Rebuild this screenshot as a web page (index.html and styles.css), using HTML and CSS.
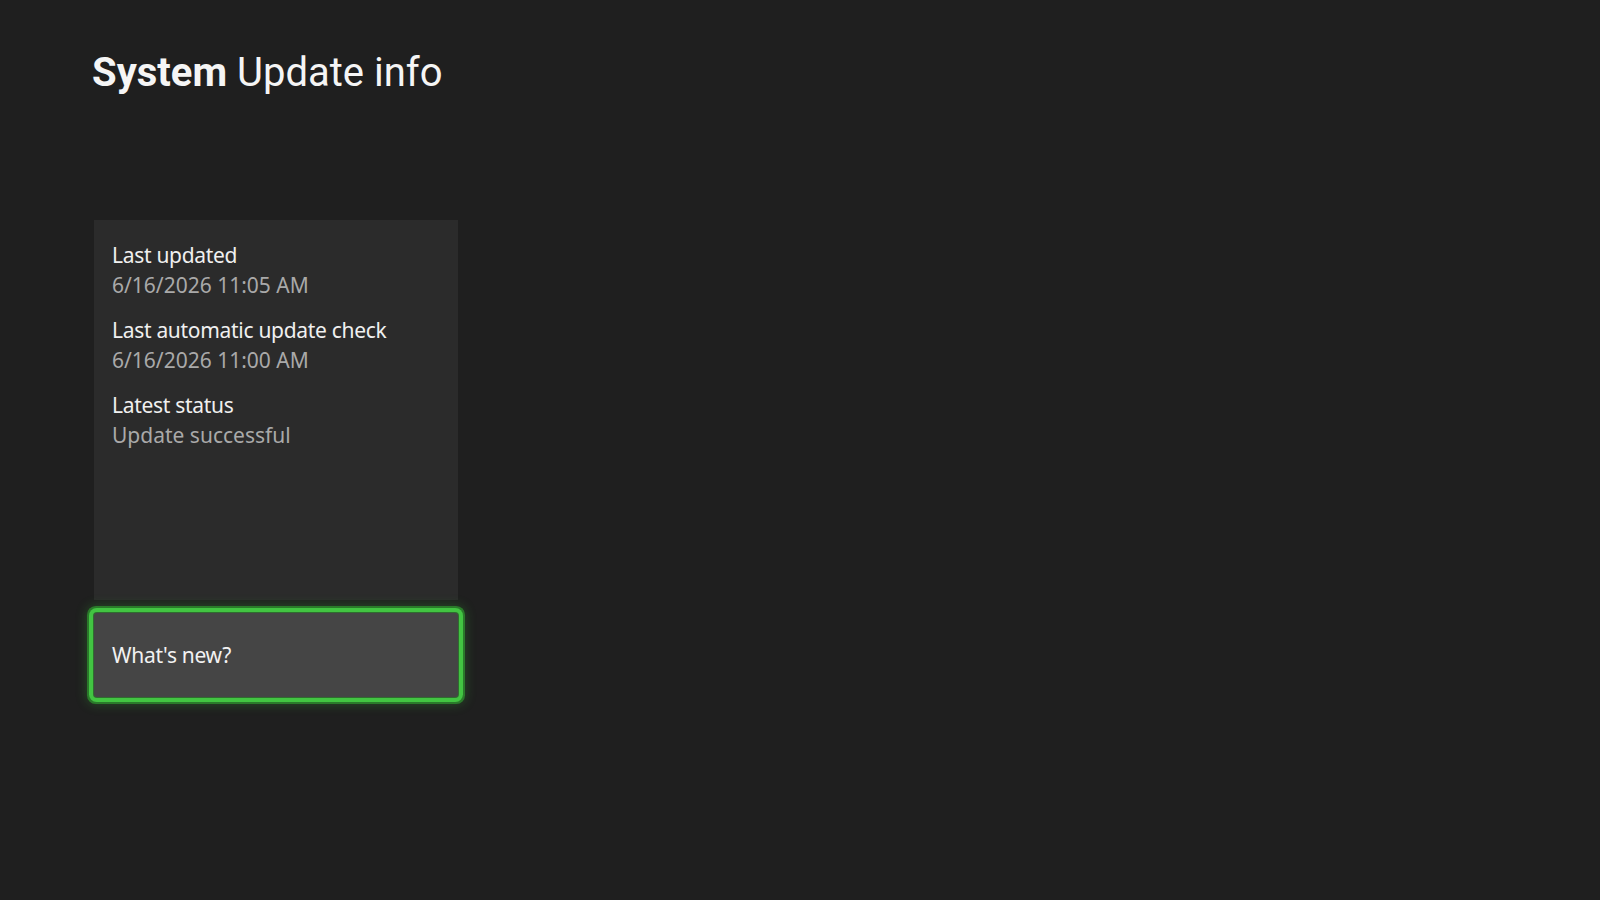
FILE: index.html
```html
<!DOCTYPE html>
<html lang="en">
<head>
<meta charset="utf-8">
<title>System Update info</title>
<link rel="stylesheet" href="styles.css">
</head>
<body>
<div class="page">
  <h1 class="title"><span class="title-strong">System</span> Update info</h1>
  <div class="panel">
    <div class="info-card">
      <div class="info-group">
        <div class="info-label">Last updated</div>
        <div class="info-value">6/16/2026 11:05 AM</div>
      </div>
      <div class="info-group">
        <div class="info-label">Last automatic update check</div>
        <div class="info-value">6/16/2026 11:00 AM</div>
      </div>
      <div class="info-group">
        <div class="info-label">Latest status</div>
        <div class="info-value">Update successful</div>
      </div>
    </div>
    <button class="action-button">What's new?</button>
  </div>
</div>
</body>
</html>
```

FILE: styles.css
```css
html, body {
  margin: 0;
  padding: 0;
  background: #1f1f1f;
}

body {
  width: 1600px;
  height: 900px;
  overflow: hidden;
  font-family: "Noto Sans", "Open Sans", sans-serif;
  color: #f2f2f2;
}

.page {
  display: flex;
  flex-direction: column;
  padding: 0 0 0 94px;
}

.title {
  margin: 0 0 0 -2px;
  padding-top: 45px;
  font-family: Roboto, "Noto Sans", sans-serif;
  font-size: 40px;
  line-height: 56px;
  font-weight: 400;
  color: #f5f5f5;
  letter-spacing: 0;
}

.title-strong {
  font-weight: 700;
}

.panel {
  margin-top: 119px;
  width: 364px;
  display: flex;
  flex-direction: column;
  gap: 13px;
}

.info-card {
  height: 380px;
  box-sizing: border-box;
  background: #2b2b2b;
  padding: 20px 18px;
  display: flex;
  flex-direction: column;
  gap: 15px;
}

.info-label {
  font-size: 21px;
  line-height: 30px;
  color: #f0f0f0;
  letter-spacing: -0.3px;
}

.info-value {
  font-size: 21px;
  line-height: 30px;
  color: #a9a9a9;
}

.action-button {
  height: 84px;
  box-sizing: border-box;
  padding: 0 18px;
  text-align: left;
  font-family: inherit;
  font-size: 21px;
  line-height: 30px;
  color: #f2f2f2;
  background: #454545;
  border: none;
  border-radius: 3px;
  letter-spacing: -0.3px;
  box-shadow:
    0 0 0 1px #2f6e2f,
    0 0 0 5px #42c442,
    0 0 0 7px #2a7a2a,
    0 0 12px 7px rgba(60, 190, 60, 0.3);
}
```
